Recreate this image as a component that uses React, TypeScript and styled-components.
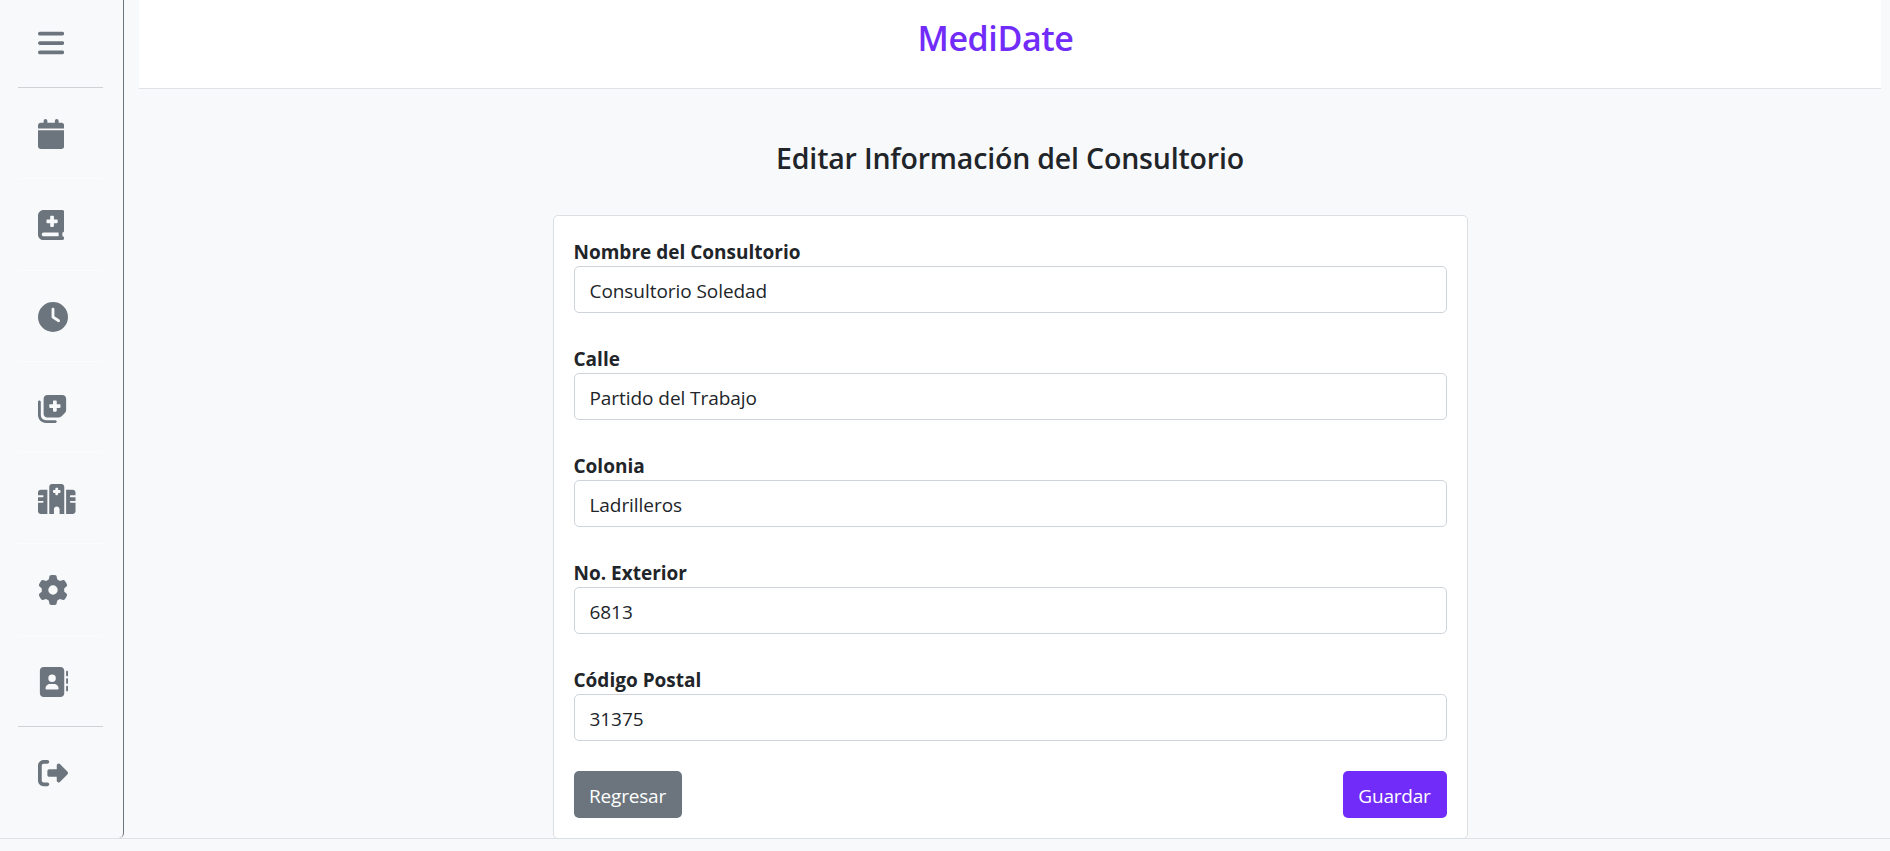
import React from "react";
import styled, { createGlobalStyle, css } from "styled-components";
import {
  FaBars,
  FaCalendar,
  FaBookMedical,
  FaClock,
  FaNotesMedical,
  FaHospital,
  FaGear,
  FaAddressBook,
  FaRightFromBracket,
} from "react-icons/fa6";

const GlobalStyle = createGlobalStyle`
  *, *::before, *::after { box-sizing: border-box; }
  body {
    margin: 0;
    background: #f8f9fb;
    color: #212529;
    font-family: "Segoe UI", "Open Sans", "Noto Sans", sans-serif;
    font-size: 19px;
    line-height: 30px;
    overflow: hidden;
  }
`;

const Shell = styled.div`
  display: flex;
  height: 838px;
`;

const Sidebar = styled.nav`
  flex: 0 0 124px;
  padding: 0 20px 0 18px;
  border-right: 1px solid #6c757d;
  border-radius: 0 0 5px 5px;
`;

const NavItem = styled.a<{
  $first?: boolean;
  $line?: "strong" | "faint";
  $iconWidth: number;
}>`
  display: flex;
  align-items: center;
  width: 85px;
  height: ${(p) => (p.$first ? "88px" : "91.25px")};
  padding-left: 20px;
  padding-top: ${(p) => (p.$first ? "0" : "2px")};
  padding-bottom: ${(p) => (p.$first ? "2px" : "0")};
  color: #6c757d;
  border-bottom: 1px solid
    ${(p) => (p.$line === "strong" ? "#d0d3d6" : p.$line === "faint" ? "#fbfcfd" : "transparent")};

  svg {
    display: block;
    flex: none;
    height: 30px;
    width: ${(p) => p.$iconWidth}px;
  }
`;

const Main = styled.main`
  flex: 1;
  display: flex;
  flex-direction: column;
  padding: 0 9px 0 15px;
`;

const Header = styled.header`
  flex: 0 0 89px;
  display: flex;
  justify-content: center;
  padding: 17px 29px 0 0;
  background: #fff;
  border-bottom: 1px solid #dee2e6;
`;

const Brand = styled.h1`
  margin: 0;
  color: #712cf9;
  font-size: 34px;
  font-weight: 600;
  letter-spacing: -0.4px;
  line-height: 42px;
`;

const Title = styled.h2`
  margin: 51px 0 38px;
  font-size: 28.5px;
  font-weight: 600;
  letter-spacing: -0.18px;
  line-height: 37px;
  text-align: center;
`;

const Card = styled.form`
  display: flex;
  flex-direction: column;
  gap: 30px;
  width: 915px;
  height: 624px;
  margin: 0 auto;
  padding: 20px;
  background: #fff;
  border: 1px solid #dcdfe2;
  border-radius: 5px;
`;

const Field = styled.label`
  display: flex;
  flex-direction: column;
`;

const FieldName = styled.span`
  height: 30px;
  padding-top: 1px;
  font-weight: 700;
`;

const Input = styled.input`
  height: 47px;
  padding: 2px 15px 0;
  color: #212529;
  background: #fff;
  border: 1px solid #ced4da;
  border-radius: 5px;
  font: inherit;
  letter-spacing: -0.06px;
  outline: 0;
`;

const Actions = styled.div`
  display: flex;
  justify-content: space-between;
`;

const Button = styled.button<{ $primary?: boolean }>`
  height: 47px;
  padding: 2px 0 0;
  color: #fff;
  border: 0;
  border-radius: 5px;
  font: inherit;
  letter-spacing: -0.2px;
  ${(p) =>
    p.$primary
      ? css`
          width: 104px;
          background: #712cf9;
        `
      : css`
          width: 108px;
          background: #6c757d;
        `}
`;

const Footer = styled.footer`
  height: 13px;
  border-top: 1px solid #dee2e6;
  background: #f8f9fb;
`;

const navItems = [
  { id: "agenda", Icon: FaCalendar, width: 26.25, line: "faint" as const },
  { id: "expedientes", Icon: FaBookMedical, width: 26.25, line: "faint" as const },
  { id: "horarios", Icon: FaClock, width: 30, line: "faint" as const },
  { id: "notas", Icon: FaNotesMedical, width: 30, line: "faint" as const },
  { id: "consultorios", Icon: FaHospital, width: 37.5, line: "faint" as const },
  { id: "ajustes", Icon: FaGear, width: 30, line: "faint" as const },
  { id: "contactos", Icon: FaAddressBook, width: 30, line: "strong" as const },
  { id: "salir", Icon: FaRightFromBracket, width: 30, line: undefined },
];

const fields = [
  { name: "Nombre del Consultorio", value: "Consultorio Soledad" },
  { name: "Calle", value: "Partido del Trabajo" },
  { name: "Colonia", value: "Ladrilleros" },
  { name: "No. Exterior", value: "6813" },
  { name: "Código Postal", value: "31375" },
];

export default function App() {
  return (
    <>
      <GlobalStyle />
      <Shell>
        <Sidebar>
          <NavItem $first $line="strong" $iconWidth={26.25}>
            <FaBars />
          </NavItem>
          {navItems.map(({ id, Icon, width, line }) => (
            <NavItem key={id} $line={line} $iconWidth={width}>
              <Icon />
            </NavItem>
          ))}
        </Sidebar>
        <Main>
          <Header>
            <Brand>MediDate</Brand>
          </Header>
          <Title>Editar Información del Consultorio</Title>
          <Card>
            {fields.map((f) => (
              <Field key={f.name}>
                <FieldName>{f.name}</FieldName>
                <Input defaultValue={f.value} />
              </Field>
            ))}
            <Actions>
              <Button type="button">Regresar</Button>
              <Button type="button" $primary>
                Guardar
              </Button>
            </Actions>
          </Card>
        </Main>
      </Shell>
      <Footer />
    </>
  );
}
